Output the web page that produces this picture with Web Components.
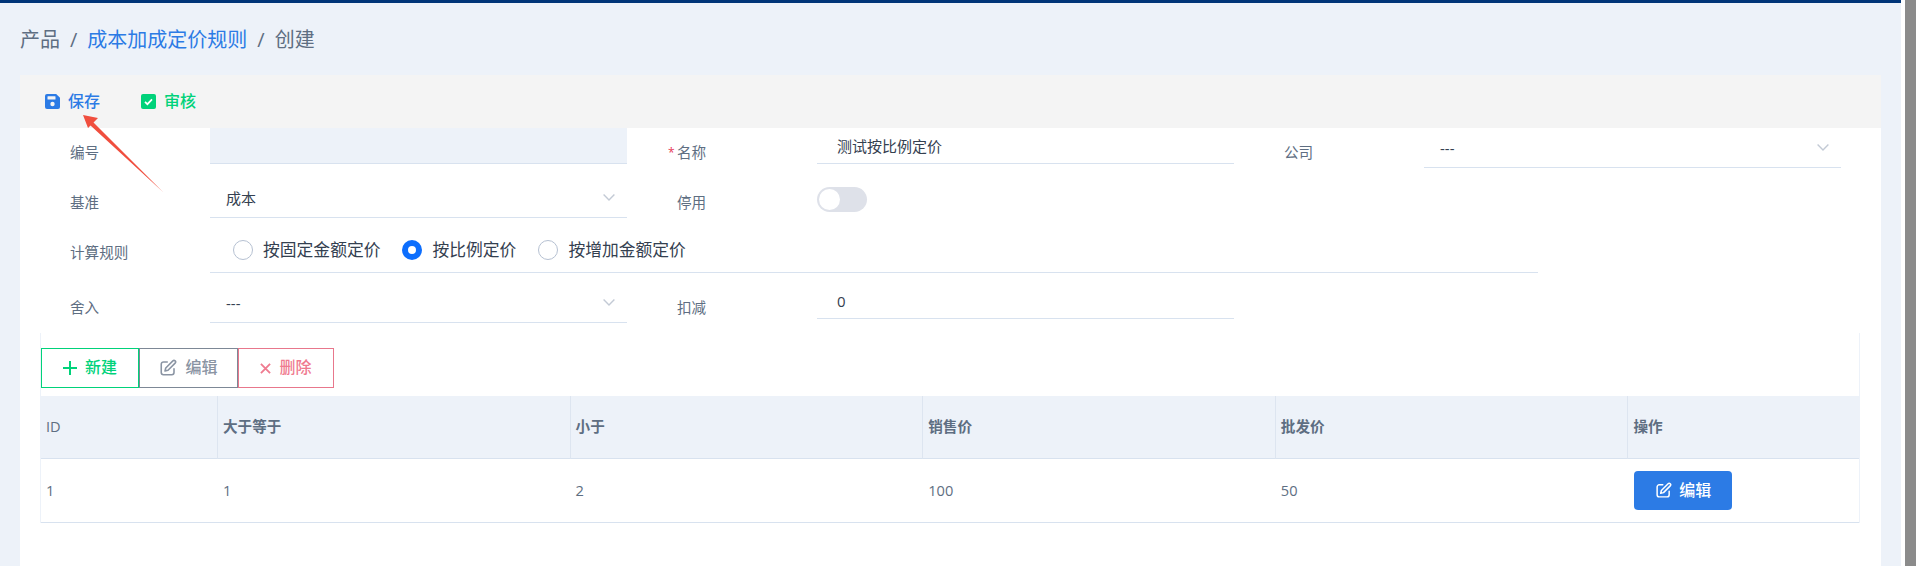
<!DOCTYPE html>
<html lang="zh">
<head>
<meta charset="utf-8">
<title>创建</title>
<style>
html,body{margin:0;height:566px;overflow:hidden;background:#fff}
body{font:15px/1.2 "Open Sans","Noto Sans CJK SC",sans-serif;color:#5e6e82}
</style>
</head>
<body>
<page-shell>
  <crumb-bar></crumb-bar>
  <form-card>
    <action-bar slot="actions"></action-bar>
    <form-grid slot="form">
      <form-field label="编号"><text-input readonly-look></text-input></form-field>
      <form-field label="名称" required><text-input value="测试按比例定价"></text-input></form-field>
      <form-field label="公司"><select-box value="---"></select-box></form-field>
      <form-field label="基准"><select-box value="成本"></select-box></form-field>
      <form-field label="停用"><toggle-switch></toggle-switch></form-field>
      <span></span>
      <form-field label="计算规则" wide>
        <radio-row>
          <radio-option>按固定金额定价</radio-option>
          <radio-option checked>按比例定价</radio-option>
          <radio-option>按增加金额定价</radio-option>
        </radio-row>
      </form-field>
      <form-field label="舍入"><select-box value="---"></select-box></form-field>
      <form-field label="扣减"><text-input value="0"></text-input></form-field>
      <span></span>
    </form-grid>
    <rule-table slot="table"></rule-table>
  </form-card>
  <pointer-arrow></pointer-arrow>
</page-shell>

<script>
const ICONS = {
  edit:'<svg viewBox="0 0 24 24" fill="none" stroke="currentColor" stroke-width="2.1" stroke-linecap="round" stroke-linejoin="round"><path d="M11 4H6a3 3 0 0 0-3 3v11a3 3 0 0 0 3 3h11a3 3 0 0 0 3-3v-5"/><path d="M18.5 2.5a2.1 2.1 0 0 1 3 3L12 15l-4 1 1-4z"/></svg>',
  plus:'<svg viewBox="0 0 14 14" fill="none" stroke="currentColor" stroke-width="2"><path d="M7 0v14M0 7h14"/></svg>',
  times:'<svg viewBox="0 0 12 12" fill="none" stroke="currentColor" stroke-width="2"><path d="M1 1l10 10M11 1L1 11"/></svg>',
  save:'<svg viewBox="0 0 15 15"><path fill="#2c7be5" d="M2 0h9.2L15 3.8V13a2 2 0 0 1-2 2H2a2 2 0 0 1-2-2V2a2 2 0 0 1 2-2z"/><rect x="2.5" y="2.2" width="8" height="3.2" rx=".5" fill="#f4f4f4"/><circle cx="7.5" cy="10" r="2.2" fill="#f4f4f4"/></svg>',
  check:'<svg viewBox="0 0 15 15"><rect width="15" height="15" rx="2" fill="#00d27a"/><path d="M4 7.8l2.4 2.4L11 5.4" fill="none" stroke="#fff" stroke-width="1.7"/></svg>',
  chevron:'<svg viewBox="0 0 12 7" fill="none" stroke="#c3cad5" stroke-width="1.4"><path d="M.6.6L6 6l5.4-5.4"/></svg>'
};
function def(name, css, html, extra){
  customElements.define(name, class extends HTMLElement{
    constructor(){ super(); this.attachShadow({mode:'open'}); }
    connectedCallback(){
      const h = typeof html === 'function' ? html(this) : html;
      this.shadowRoot.innerHTML = `<style>${css}</style>${h}`;
    }
  });
}
def('page-shell',`
  :host{display:flex;height:566px;background:#fff;position:relative}
  .main{width:1901px;background:#edf2f9;display:flex;flex-direction:column}
  .top{height:3px;background:#003578;flex:none}
  .scroll{width:11px;margin-left:4px;background:#8b8b8b}
`,`<div class="main"><div class="top"></div><slot></slot></div><div class="scroll"></div>`);

def('crumb-bar',`
  :host{display:flex;align-items:center;height:72px;padding-left:20px;font-size:20px;color:#5e6e82;box-sizing:border-box;padding-top:2px;flex:none}
  a{color:#2c7be5;text-decoration:none}
  i{font-style:normal;margin:0 10px;color:#5e6e82}
`,`<span>产品</span><i>/</i><a>成本加成定价规则</a><i>/</i><span>创建</span>`);

def('form-card',`
  :host{display:block;flex:1;margin:0 20px;background:#fff}
`,`<slot name="actions"></slot><slot name="form"></slot><slot name="table"></slot>`);

def('action-bar',`
  :host{display:flex;align-items:center;height:53px;background:#f4f4f4;padding-left:25px;font-size:16px;font-weight:500;box-sizing:border-box}
  span{display:flex;align-items:center;gap:8px}
  .s{color:#2c7be5;margin-right:41px}
  .c{color:#00d27a}
  .ic{display:block;width:15px;height:15px}
  .ic svg{display:block;width:15px;height:15px}
`,`<span class="s"><b class="ic">${ICONS.save}</b>保存</span><span class="c"><b class="ic">${ICONS.check}</b>审核</span>`);

def('form-grid',`
  :host{display:grid;grid-template-columns:607px 607px 607px;padding-left:42px}
`,`<slot></slot>`);

def('form-field',`
  :host{display:grid;grid-template-columns:148px 417px;align-items:start;height:50px;color:#5e6e82}
  :host([wide]){grid-column:1 / -1;grid-template-columns:148px 1328px;height:55px}
  label{position:relative;height:50px;display:flex;align-items:center;padding-left:8px;font-size:14.6px}
  em{position:absolute;left:-1px;top:18px;font-style:normal;color:#e63757;font-size:12px}
`,h=>`<label>${h.hasAttribute('required')?'<em>*</em>':''}${h.getAttribute('label')}</label><div><slot></slot></div>`);

def('text-input',`
  :host{display:flex;align-items:center;height:36px;box-sizing:border-box;border-bottom:1px solid #d8e2ef;padding-left:20px;color:#344050;font-size:15px}
  :host([readonly-look]){background:#edf2f9}
`,h=>h.getAttribute('value')||'');

def('select-box',`
  :host{display:flex;align-items:center;justify-content:space-between;height:40px;box-sizing:border-box;border-bottom:1px solid #d8e2ef;padding:0 12px 0 16px;color:#344050;font-size:15px}
  svg{display:block;width:12px;height:7px}
`,h=>`<span>${h.getAttribute('value')}</span>${ICONS.chevron}`);

def('toggle-switch',`
  :host{display:block;width:50px;height:25px;margin-top:9px;background:#dee1e9;border-radius:13px;position:relative}
  i{position:absolute;left:2px;top:2px;width:21px;height:21px;border-radius:50%;background:#fff}
`,`<i></i>`);

def('radio-row',`
  :host{display:flex;align-items:center;height:45px;box-sizing:border-box;border-bottom:1px solid #d8e2ef;padding-left:23px;gap:22px}
`,`<slot></slot>`);

def('radio-option',`
  :host{display:flex;align-items:center;gap:10px;color:#344050;font-size:16.8px}
  i{width:20px;height:20px;box-sizing:border-box;border-radius:50%;border:1px solid #b6c1d2;background:#fff;flex:none}
  :host([checked]) i{border:6px solid #0d6efd}
`,`<i></i><slot></slot>`);

def('tool-button',`
  :host{display:flex;align-items:center;justify-content:center;gap:8px;height:40px;box-sizing:border-box;border:1px solid currentColor;font-size:16px;font-weight:500}
  :host([kind=add]){width:98px;color:#00d27a}
  :host([kind=mod]){width:99px;color:#8a94a3;border-color:#7d8896}
  :host([kind=del]){width:96px;color:#ef7b90;border-color:#e8778c}
  svg{display:block}
  :host([kind=add]) svg{width:14px;height:14px}
  :host([kind=mod]) svg{width:18px;height:18px}
  :host([kind=del]) svg{width:11px;height:11px}
`,h=>`${ICONS[h.getAttribute('icon')]}<slot></slot>`);

def('rule-table',`
  :host{display:block;margin-left:20px;width:1820px;box-sizing:border-box;border:solid #edf2f9;border-width:0 1px;padding-top:15px}
  .tools{display:flex;margin-bottom:8px}
  .g{display:grid;grid-template-columns:177px repeat(4,352.6px) 1fr}
  .h{height:63px;box-sizing:border-box;background:#edf2f9;border-bottom:1px solid #d8e2ef;border-right:1px solid #dde5f0;display:flex;align-items:center;padding-left:5px;font-weight:700;color:#5e6e82;font-size:14.6px}
  .h:nth-child(6){border-right:0}
  .h.id{font-weight:400}
  .c{height:64px;box-sizing:border-box;border-bottom:1px solid #d8e2ef;display:flex;align-items:center;padding-left:5px;color:#5e6e82;font-size:14.6px}
  .btn{display:flex;align-items:center;justify-content:center;gap:7px;width:98px;height:39px;background:#2c7be5;color:#fff;border-radius:4px;font-size:16px;font-weight:500;margin-left:1px}
  .btn svg{display:block;width:17px;height:17px}
`,`<div class="tools">
    <tool-button kind="add" icon="plus">新建</tool-button>
    <tool-button kind="mod" icon="edit">编辑</tool-button>
    <tool-button kind="del" icon="times">删除</tool-button>
  </div>
  <div class="g">
    <div class="h id">ID</div><div class="h">大于等于</div><div class="h">小于</div><div class="h">销售价</div><div class="h">批发价</div><div class="h">操作</div>
    <div class="c">1</div><div class="c">1</div><div class="c">2</div><div class="c">100</div><div class="c">50</div>
    <div class="c"><span class="btn">${ICONS.edit}编辑</span></div>
  </div>`);

def('pointer-arrow',`
  :host{position:absolute;left:83px;top:114px;width:82px;height:80px;pointer-events:none}
  svg{display:block}
`,`<svg width="82" height="80" viewBox="0 0 82 80"><path fill="#f04e3e" d="M0 1L15 4 10.500 8.500 80 78 7.500 11.500 5 14z"/></svg>`);
</script>
</body>
</html>
